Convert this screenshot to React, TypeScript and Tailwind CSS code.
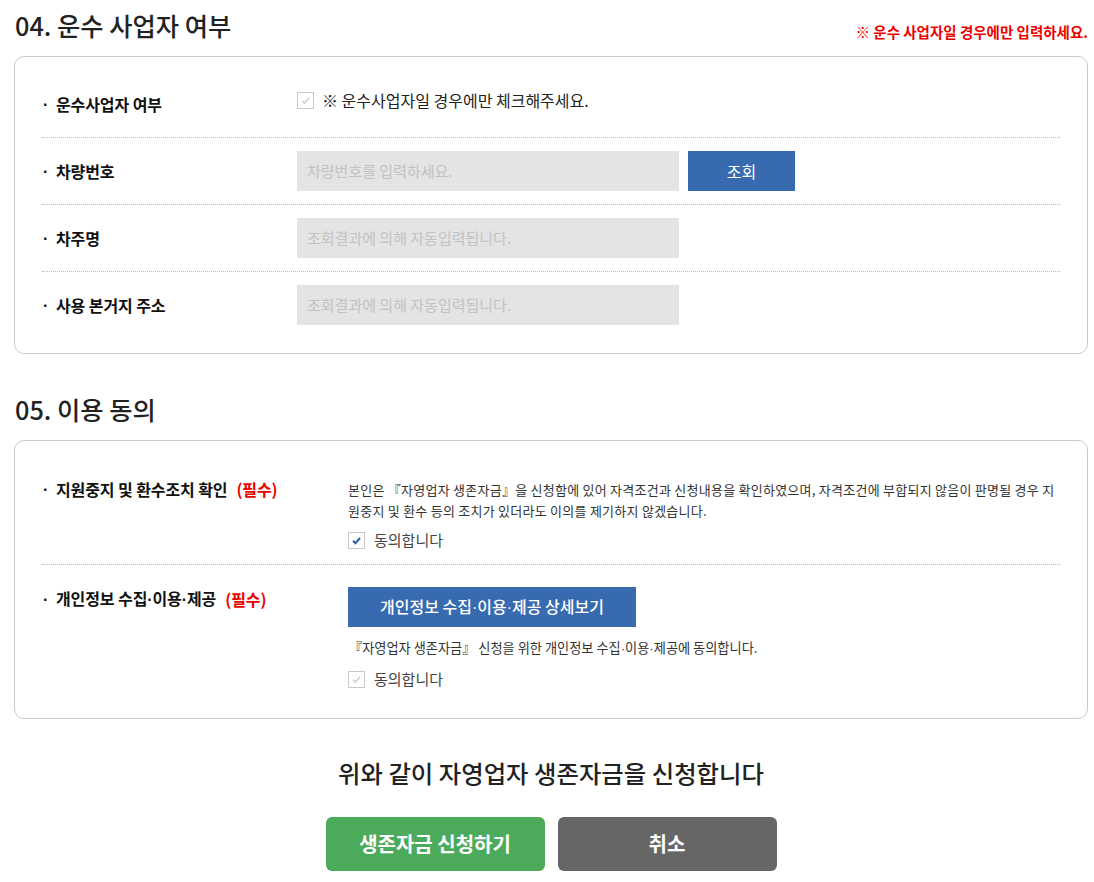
import React from "react";

function Check({ state }: { state: "disabled" | "checked" }) {
  const color = state === "checked" ? "#2d5ea8" : "#cfcfcf";
  return (
    <span className="inline-flex h-[17px] w-[17px] shrink-0 items-center justify-center border border-[#c9c9c9] bg-white">
      <svg width="11" height="11" viewBox="0 0 11 11">
        <path d="M2 5.8 L4.4 8.2 L9 3" fill="none" stroke={color} strokeWidth={state === "checked" ? 2 : 1.6} />
      </svg>
    </span>
  );
}

function Dot() {
  return <span className="font-['Liberation_Sans',sans-serif]">·</span>;
}

function Label({ children, extra }: { children: React.ReactNode; extra?: React.ReactNode }) {
  return (
    <div className="flex items-center text-[16px] font-bold leading-[21px] tracking-[-0.1px] text-[#111]">
      <span className="w-[14px] shrink-0 pl-[1px] font-['Liberation_Sans',sans-serif] font-bold">·</span>
      <span>{children}</span>
      {extra}
    </div>
  );
}

function Row1({ label, children, first }: { label: string; children: React.ReactNode; first?: boolean }) {
  return (
    <div className={`flex items-center py-[13px] ${first ? "" : "border-t border-dotted border-[#bdbdbd]"}`}>
      <div className="w-[255px] shrink-0">
        <Label>{label}</Label>
      </div>
      <div className="flex flex-1 items-center">{children}</div>
    </div>
  );
}

function Input({ text }: { text: string }) {
  return (
    <div className="flex h-[40px] w-[382px] items-center bg-[#e4e4e4] pl-[10px] text-[15px] text-[#c2c2c2]">
      {text}
    </div>
  );
}

export default function App() {
  return (
    <div className="w-[1094px] bg-white font-['Noto_Sans_CJK_KR','Noto_Sans',sans-serif] text-[#222]">
      <div className="ml-[14px] w-[1074px]">
        {/* Section 04 */}
        <div className="flex items-end justify-between pt-[9px] pb-[15px]">
          <h2 className="pl-[1px] text-[25.3px] font-medium leading-[32px] text-[#222]">04. 운수 사업자 여부</h2>
          <p className="text-[14.5px] font-bold leading-[18px] text-[#ee0000]">
            ※ 운수 사업자일 경우에만 입력하세요.
          </p>
        </div>
        <div className="rounded-[10px] border border-[#cbcbcb] px-[27px] pt-[14px] pb-[15px]">
          <Row1 label="운수사업자 여부" first>
            <div className="flex h-[40px] items-center gap-[8px] self-start pb-[8px]">
              <Check state="disabled" />
              <span className="text-[16px] text-[#222]">※ 운수사업자일 경우에만 체크해주세요.</span>
            </div>
          </Row1>
          <Row1 label="차량번호">
            <Input text="차량번호를 입력하세요." />
            <button className="ml-[9px] flex h-[40px] w-[107px] items-center justify-center bg-[#386ab0] text-[16px] text-white">
              조회
            </button>
          </Row1>
          <Row1 label="차주명">
            <Input text="조회결과에 의해 자동입력됩니다." />
          </Row1>
          <Row1 label="사용 본거지 주소">
            <Input text="조회결과에 의해 자동입력됩니다." />
          </Row1>
        </div>

        {/* Section 05 */}
        <div className="pt-[39px] pb-[15px]">
          <h2 className="pl-[1px] text-[25.3px] font-medium leading-[32px] text-[#222]">05. 이용 동의</h2>
        </div>
        <div className="rounded-[10px] border border-[#cbcbcb] px-[27px]">
          <div className="flex pt-[38px] pb-[13px]">
            <div className="w-[306px] shrink-0">
              <Label extra={<span className="ml-[9px] text-[#ee0000]">(필수)</span>}>
                지원중지 및 환수조치 확인
              </Label>
            </div>
            <div className="flex-1">
              <p className="whitespace-nowrap text-[13px] leading-[21px] tracking-[0.25px] text-[#333]">
                본인은 『자영업자 생존자금』을 신청함에 있어 자격조건과 신청내용을 확인하였으며, 자격조건에 부합되지 않음이 판명될 경우 지
                <br />
                원중지 및 환수 등의 조치가 있더라도 이의를 제기하지 않겠습니다.
              </p>
              <div className="mt-[9px] flex h-[21px] items-center gap-[9px]">
                <Check state="checked" />
                <span className="text-[15px] text-[#444]">동의합니다</span>
              </div>
            </div>
          </div>
          <div className="flex border-t border-dotted border-[#bdbdbd] pt-[22px] pb-[28px]">
            <div className="w-[306px] shrink-0 pt-[1px]">
              <Label extra={<span className="ml-[9px] text-[#ee0000]">(필수)</span>}>
                개인정보 수집<Dot />이용<Dot />제공
              </Label>
            </div>
            <div className="flex-1">
              <button className="flex h-[40px] w-[288px] items-center justify-center bg-[#386ab0] text-[16px] font-medium text-white">
                <span>
                  개인정보 수집<Dot />이용<Dot />제공 상세보기
                </span>
              </button>
              <p className="mt-[10px] pl-[1px] text-[13.2px] leading-[21px] text-[#333]">
                『자영업자 생존자금』 신청을 위한 개인정보 수집<Dot />이용<Dot />제공에 동의합니다.
              </p>
              <div className="mt-[10px] flex h-[21px] items-center gap-[9px]">
                <Check state="disabled" />
                <span className="text-[15px] text-[#444]">동의합니다</span>
              </div>
            </div>
          </div>
        </div>

        {/* Footer */}
        <div className="pt-[38px] text-center">
          <p className="text-[24.4px] font-medium leading-[32px] text-[#222]">위와 같이 자영업자 생존자금을 신청합니다</p>
        </div>
        <div className="flex justify-center gap-[13px] pt-[28px] pb-[11px]">
          <button className="flex h-[54px] w-[219px] items-center justify-center rounded-[6px] bg-[#4caa5b] text-[20px] font-bold text-white">
            생존자금 신청하기
          </button>
          <button className="flex h-[54px] w-[219px] items-center justify-center rounded-[6px] bg-[#666666] text-[20px] font-bold text-white">
            취소
          </button>
        </div>
      </div>
    </div>
  );
}
